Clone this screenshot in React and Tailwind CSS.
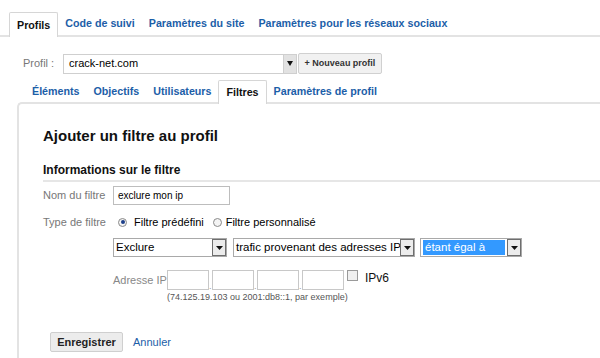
import React from "react";

const blue = "text-[#1c5ea8]";

function Arrow({ cls = "" }) {
  return (
    <div className={"flex items-center justify-center " + cls}>
      <svg width="7" height="4" viewBox="0 0 7 4"><path d="M0 0h7L3.5 4z" fill="#111" /></svg>
    </div>
  );
}

function Select({ w, text, hl }) {
  return (
    <div className={"flex h-[19px] border border-[#a9a9a9] bg-white " + w}>
      <div className="flex-1 flex items-center px-[2px] overflow-hidden">
        {hl ? (
          <div className="h-[15px] flex-1 bg-[#3399ff] text-white flex items-center px-[2px] text-[11.5px] whitespace-nowrap">{text}</div>
        ) : (
          <span className="text-[11.5px] text-black whitespace-nowrap">{text}</span>
        )}
      </div>
      <Arrow cls="w-[14px] h-[17px] border border-[#6e6e6e] bg-[#ececec]" />
    </div>
  );
}

function Radio({ checked }) {
  return (
    <div className="w-[9px] h-[9px] rounded-full border border-[#8a8a8a] bg-[#f4f4f4] flex items-center justify-center">
      {checked && <div className="w-[4px] h-[4px] rounded-full bg-[#1d3f8a]" />}
    </div>
  );
}

export default function App() {
  return (
    <div className="w-[600px] h-[358px] overflow-hidden bg-white text-[#222]" style={{ fontFamily: '"Liberation Sans", Arial, sans-serif' }}>
      {/* top tabs */}
      <div className="pt-[12px] pl-[9px] flex items-end border-b-2 border-[#e3e3e3] text-[10.7px] font-bold">
        <div className="h-[25px] -mb-[2px] px-[7px] flex items-center border border-b-0 border-[#d6d6d6] bg-white rounded-t-[2px] text-[#111]">Profils</div>
        <div className={"h-[23px] px-[7px] flex items-center " + blue}>Code de suivi</div>
        <div className={"h-[23px] px-[7px] flex items-center " + blue}>Paramètres du site</div>
        <div className={"h-[23px] px-[7px] flex items-center " + blue}>Paramètres pour les réseaux sociaux</div>
      </div>

      {/* profile row */}
      <div className="mt-[16px] flex items-center h-[21px]">
        <span className="ml-[23px] w-[40px] text-[11px] text-[#777]">Profil :</span>
        <div className="flex h-[20px] w-[234px] border border-[#cfcfcf] bg-white">
          <div className="flex-1 flex items-center pl-[5px] text-[11px] text-black">crack-net.com</div>
          <div className="w-[13px] bg-[#e2e2e2] border-l border-[#cfcfcf] flex items-center justify-center">
            <svg width="6" height="5" viewBox="0 0 6 5"><path d="M0 0h6L3 5z" fill="#111" /></svg>
          </div>
        </div>
        <div className="ml-[1px] h-[21px] w-[84px] border border-[#d0d0d0] bg-[#f1f1f1] rounded-[2px] flex items-center justify-center text-[9px] font-bold text-[#333]">+ Nouveau profil</div>
      </div>

      {/* sub tabs */}
      <div className="mt-[6px] pl-[25px] flex items-end text-[10.7px] font-bold">
        <div className={"h-[22px] px-[7px] flex items-center " + blue}>Éléments</div>
        <div className={"h-[22px] px-[7px] flex items-center " + blue}>Objectifs</div>
        <div className={"h-[22px] px-[7px] flex items-center " + blue}>Utilisateurs</div>
        <div className="relative z-10 h-[24px] -mb-[2px] px-[7px] flex items-center border border-b-0 border-[#d6d6d6] bg-white rounded-t-[2px] text-[#111]">Filtres</div>
        <div className={"h-[22px] px-[7px] flex items-center " + blue}>Paramètres de profil</div>
      </div>

      {/* panel */}
      <div className="ml-[17px] h-[260px] border-l-2 border-t-2 border-[#e3e3e3] rounded-tl-[5px] pl-[24px]">
        <div className="pt-[22px] text-[15px] font-bold text-[#111] leading-[19px]">Ajouter un filtre au profil</div>
        <div className="mt-[17px] pb-[2px] border-b-2 border-[#e6e6e6] text-[12px] font-bold text-[#111] leading-[16px]">Informations sur le filtre</div>

        <div className="mt-[4px] flex items-center h-[19px]">
          <span className="w-[70px] text-[11px] text-[#777]">Nom du filtre</span>
          <div className="w-[117px] h-[19px] border border-[#bdbdbd] flex items-center pl-[4px] text-[10px] text-black">exclure mon ip</div>
        </div>

        <div className="mt-[9px] flex items-center h-[16px] text-[11px]">
          <span className="w-[70px] text-[#777]">Type de filtre</span>
          <div className="ml-[5px]"><Radio checked /></div>
          <span className="ml-[7px] text-black">Filtre prédéfini</span>
          <div className="ml-[9px]"><Radio /></div>
          <span className="ml-[4px] text-black">Filtre personnalisé</span>
        </div>

        <div className="mt-[8px] ml-[70px] flex items-center">
          <Select w="w-[114px]" text="Exclure" />
          <div className="ml-[6px]"><Select w="w-[182px]" text="trafic provenant des adresses IP" /></div>
          <div className="ml-[5px]"><Select w="w-[102px]" text="étant égal à" hl /></div>
        </div>

        <div className="mt-[13px] ml-[70px] flex items-start">
          <span className="w-[54px] h-[20px] flex items-center text-[11px] text-[#888]">Adresse IP</span>
          <div className="flex flex-col">
            <div className="flex items-end">
              <div className="w-[42px] h-[20px] border border-[#c8c8c8]" />
              <span className="w-[3px] text-[9px] text-[#999] leading-[8px]">.</span>
              <div className="w-[42px] h-[20px] border border-[#c8c8c8]" />
              <span className="w-[3px] text-[9px] text-[#999] leading-[8px]">.</span>
              <div className="w-[42px] h-[20px] border border-[#c8c8c8]" />
              <span className="w-[3px] text-[9px] text-[#999] leading-[8px]">.</span>
              <div className="w-[42px] h-[20px] border border-[#c8c8c8]" />
              <div className="self-start ml-[3px] w-[11px] h-[11px] border border-[#9a9a9a] bg-[#f0f0f0]" />
              <span className="self-start ml-[7px] text-[12px] text-[#111] leading-[16px]">IPv6</span>
            </div>
            <div className="mt-[1px] text-[9px] text-[#555] leading-[12px]">(74.125.19.103 ou 2001:db8::1, par exemple)</div>
          </div>
        </div>

        <div className="mt-[29px] ml-[7px] flex items-center">
          <div className="w-[73px] h-[20px] border border-[#cfcfcf] bg-[#ececec] rounded-[2px] flex items-center justify-center text-[11px] font-bold text-[#222]">Enregistrer</div>
          <span className={"ml-[10px] text-[11px] " + blue}>Annuler</span>
        </div>
      </div>
    </div>
  );
}
